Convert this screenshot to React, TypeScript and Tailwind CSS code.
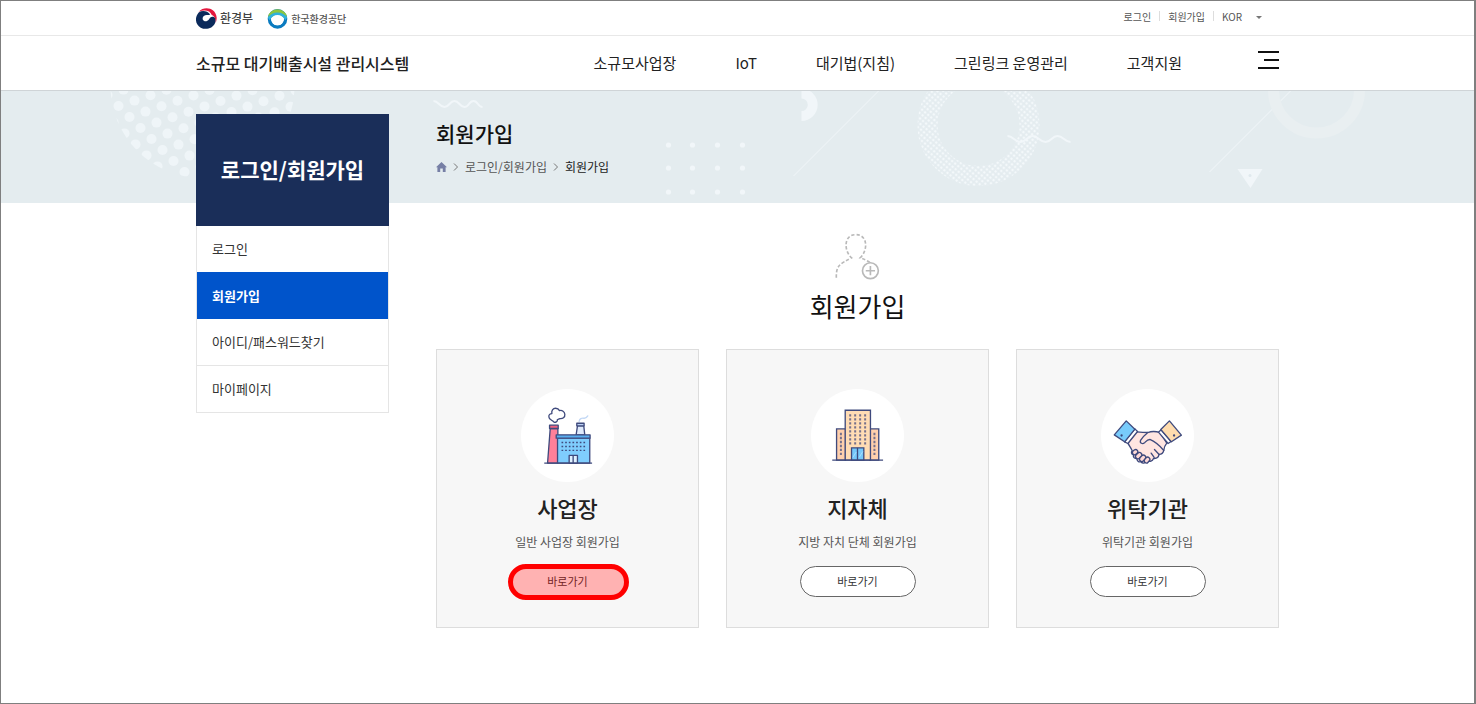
import type { ReactNode } from "react";

const navItems = ["소규모사업장", "IoT", "대기법(지침)", "그린링크 운영관리", "고객지원"];

const sideItems = [
  { label: "로그인", active: false },
  { label: "회원가입", active: true },
  { label: "아이디/패스워드찾기", active: false },
  { label: "마이페이지", active: false },
];

const INK = "#3f4a7d";

function MinistryEmblem() {
  return (
    <svg viewBox="0 0 62 62" className="size-[21px]" aria-hidden="true">
      <path d="M8 11C24-7 58-1 61 28c0 7-1 12-3 16 0-12-3-20-12-24C42 8 26 4 8 11Z" fill="#e4173e" />
      <path
        d="M8 13C-5 28-2 49 14 58c15 8 36 2 42-13 3-9 2-17-5-19-7-1-10 3-13 8-5 7-15 7-18 0-2-8 4-12 12-13 5 0 8-1 10-2C34 9 19 6 8 13Z"
        fill="#0b2a5b"
      />
    </svg>
  );
}

function KecoEmblem() {
  return (
    <svg viewBox="0 0 62 62" className="size-[21px]" aria-hidden="true">
      <circle cx="31" cy="32" r="24" fill="none" stroke="#0a7bc0" strokeWidth="10" />
      <path d="M3 25A29 29 0 0 1 59 25L48 27Q31 10 14 27Z" fill="#8cc63f" />
      <path d="M2 28Q14 13 31 13T60 28L54 36Q45 21 31 21T8 36Z" fill="#2fb1dc" />
      <path d="M12 32Q18 24 31 24T50 32A19 19 0 0 1 12 32Z" fill="#fff" />
    </svg>
  );
}

function BannerArt() {
  // slanted dot lattice, clipped by a circle
  const dots: { x: number; y: number }[] = [];
  for (let i = -6; i < 14; i++) {
    for (let j = -8; j < 14; j++) {
      const x = 118 + i * 16 + j * 11;
      const y = 15 - i * 5.4 + j * 11;
      if (x > 95 && x < 310 && y > -8 && y < 100) dots.push({ x, y });
    }
  }

  return (
    <svg
      viewBox="0 0 1474 112"
      preserveAspectRatio="xMidYMid slice"
      className="absolute inset-x-0 top-0 h-28 w-full bg-[#e4ecef]"
      aria-hidden="true"
    >
      <defs>
        <clipPath id="dotClip">
          <circle cx="202" cy="-5" r="92" />
        </clipPath>
        <pattern id="fineDots" width="4" height="4" patternUnits="userSpaceOnUse" patternTransform="rotate(40)">
          <circle cx="2" cy="2" r="1.3" fill="#f3f8fa" />
        </pattern>
      </defs>
      <g clipPath="url(#dotClip)" fill="#eff5f8">
        {dots.map((d) => (
          <circle key={`${d.x}:${d.y}`} cx={d.x} cy={d.y} r="5" />
        ))}
      </g>
      <g fill="none" stroke="#f1f6f9" strokeWidth="2">
        <path d="M433 10c5 0 6 6 11 6s5-6 10-6 5 6 10 6 4-6 9-6 4 6 9 6" />
        <path d="M1007 45c6 0 7 6 13 6s6-6 12-6 7 6 13 6 6-6 12-6 7 6 13 6" />
        <path d="M793 85 879-1M1209 81 1291-1" strokeWidth="1" />
      </g>
      <g fill="#f1f6f9">
        {[54, 77, 101].map((y) =>
          [668, 692, 717, 742].map((x) => <circle key={`${x}-${y}`} cx={x} cy={y} r="2.6" />)
        )}
        <path d="M801-2.300A16 16 0 0 1 801 30V20A6.300 6.300 0 0 0 801 7.400Z" />
        <path d="M1237 78h25l-12 19Z" />
      </g>
      <circle cx="1249.500" cy="84.500" r="1.500" fill="#e0e9ed" />
      <circle cx="978" cy="34" r="51" fill="none" stroke="url(#fineDots)" strokeWidth="20" />
      <circle cx="1316" cy="-1" r="43" fill="none" stroke="#e9eff1" strokeWidth="11" />
    </svg>
  );
}

function JoinIcon() {
  return (
    <svg viewBox="0 0 136 140" className="h-[47px] w-[45px]" fill="none" stroke="#b9b9b9" strokeWidth="5" aria-hidden="true">
      <path d="M4 134C3 96 16 92 50 74 26 52 26 4 63 4s37 48 13 70c12 4 22 9 31 15" strokeDasharray="10 6" />
      <circle cx="107" cy="113" r="24" />
      <path d="M107 99v28M93 113h28" />
    </svg>
  );
}

function FactoryIcon() {
  return (
    <svg viewBox="62 26 280 280" className="size-full" stroke={INK} strokeWidth="4" strokeLinejoin="round" aria-hidden="true">
      <path
        d="M162 126c-7-7-16-8-16-16-1-7 4-10 9-10-2-9 3-16 11-16 6 0 10 3 12 7 8-2 15 3 16 11 1 10-7 14-15 13-4 2-6 2-8 4 3 5-7 9-9 7Z"
        fill="#fff"
      />
      <path d="M237 124c1-9 8-11 14-10s9-2 12-7" fill="none" stroke="#c3d8f5" strokeLinecap="round" />
      <path d="m232 137-4 27h26l-3-27Z" fill="#dfeafb" />
      <path d="M230 129h22v8h-22Z" fill="#bcd2f4" />
      <path d="m150 145-8 104h31V145Z" fill="#ff8099" />
      <path d="M148 135h26v10h-26Z" fill="#f0607f" />
      <path d="M172 174h97v75h-97Z" fill="#7fcdfd" />
      <path d="M168 164h102v10H168Z" fill="#58aef0" />
      <path d="M207 226h25v23h-25Zm12 0v23" fill="#dff1ff" />
      <path d="M132 249h144" />
      <path d="M184 187h72M184 199h72M184 211h72" strokeDasharray="5 6" />
    </svg>
  );
}

function BuildingIcon() {
  return (
    <svg viewBox="62 26 280 280" className="size-full" stroke={INK} strokeWidth="4" aria-hidden="true">
      <path d="M139 146h27v94h-27Z" fill="#ffd0ad" />
      <path d="M239 146h27v94h-27Z" fill="#ffd0ad" />
      <path d="M165 90h76v150h-76Z" fill="#ffdcb4" />
      <path d="M184 203h37v37h-37Z" fill="#76c9fb" />
      <path d="M202 203v37" />
      <path d="m188 232 10-16m9 16 11-18" stroke="#a9defd" strokeWidth="3" />
      <path d="M126 240h153" />
      <path d="M180 102v95M195 102v95M210 102v95M225 102v95" strokeWidth="6" strokeDasharray="7 5" stroke="#77718b" />
      <path d="M152 158v69M253 158v69" strokeWidth="6" strokeDasharray="7 5" stroke="#77718b" />
    </svg>
  );
}

function HandshakeIcon() {
  return (
    <svg
      viewBox="48 26 280 280"
      className="size-full"
      stroke={INK}
      strokeWidth="4"
      strokeLinejoin="round"
      strokeLinecap="round"
      aria-hidden="true"
    >
      <path
        d="M151 155c13 1 24 2 38 2 13-5 24-4 37 0l20 32c-6 7-8 13-9 22-2 9-8 12-14 12-2 9-9 13-17 12-3 8-11 11-19 6-6 10-14 10-19 4-7 2-12-3-12-10-8 1-12-4-10-10-7-2-8-9-4-13-4-9-9-15-13-23Z"
        fill="#ffe5e1"
      />
      <path d="M189 157c-9 7-16 15-22 24-3 8 6 12 12 7 6-6 9-10 16-10 17 7 29 18 42 33" fill="#ffe5e1" />
      <path d="m209 208 14 15M199 219l9 13" fill="none" />
      <g fill="#ffd9d6">
        <rect x="142" y="210" width="17" height="13" rx="6.500" transform="rotate(-38 150 216)" />
        <rect x="151" y="220" width="21" height="14" rx="7" transform="rotate(-44 161 227)" />
        <rect x="163" y="228" width="21" height="14" rx="7" transform="rotate(-46 173 235)" />
        <rect x="177" y="234" width="19" height="13" rx="6.500" transform="rotate(-50 186 240)" />
      </g>
      <path d="m150 146 8 8-29 36-10-5Z" fill="#fff" />
      <path d="m229 149-8 7 29 34 9-6Z" fill="#fff" />
      <path d="m124 122 26 25-31 38-31-21Z" fill="#78cbfb" />
      <path d="m254 122 36 43-30 20-32-37Z" fill="#ffdcae" />
      <circle cx="110" cy="166" r="1.500" />
      <circle cx="268" cy="166" r="1.500" />
    </svg>
  );
}

type JoinCardProps = {
  title: string;
  text: string;
  icon: ReactNode;
  highlighted?: boolean;
};

function JoinCard({ title, text, icon, highlighted }: JoinCardProps) {
  return (
    <li className="flex flex-col items-center border border-[#dddddd] bg-[#f7f7f7] pt-[39px] pb-[30px]">
      <div className="size-[93px] rounded-full bg-white">{icon}</div>
      <h3 className="mt-[5px] text-[22px] leading-10 font-medium text-[#222222]">{title}</h3>
      <p className="mt-[5px] text-xs leading-5 text-[#555555]">{text}</p>
      <div className="relative mt-3.5">
        <button
          type="button"
          className="block h-[31px] w-[116px] rounded-full border border-[#666666] bg-white text-[11px] text-[#333333]"
        >
          바로가기
        </button>
        {highlighted && (
          <span className="pointer-events-none absolute -top-0.5 -right-[3px] -bottom-[3px] -left-0.5 rounded-full border-[5px] border-[#ff0000] bg-[#ff0000]/30" />
        )}
      </div>
    </li>
  );
}

function Chevron() {
  return (
    <svg viewBox="0 0 8 8" className="size-2" fill="none" stroke="#777777" aria-hidden="true">
      <path d="m2 .5 3.500 3.500L2 7.500" />
    </svg>
  );
}

export default function App() {
  return (
    <div className="min-h-screen border border-r-2 border-[#7f7f7f] bg-white font-['Noto_Sans_CJK_KR','Noto_Sans',sans-serif] text-[#222222]">
      {/* Top utility bar */}
      <div className="border-b border-[#e8e8e8]">
        <div className="mx-auto flex h-[34px] max-w-[1083px] items-center">
          <a href="#" className="flex items-center gap-[3px] text-xs font-medium text-[#444444]">
            <MinistryEmblem />
            환경부
          </a>
          <a href="#" className="ml-3.5 flex items-center gap-[3px] text-[10px] font-medium text-[#555555]">
            <KecoEmblem />
            한국환경공단
          </a>
          <div className="mr-[17px] ml-auto flex items-center pb-1 text-[10px] text-[#555555]">
            <a href="#">로그인</a>
            <span className="mx-2 h-2.5 w-px bg-[#dddddd]" />
            <a href="#">회원가입</a>
            <span className="mx-2 h-2.5 w-px bg-[#dddddd]" />
            <div className="relative">
              <select aria-label="언어" className="w-10 appearance-none bg-transparent outline-none">
                <option>KOR</option>
              </select>
              <svg viewBox="0 0 6 3" className="pointer-events-none absolute top-1/2 right-0 h-[3px] w-1.5" aria-hidden="true">
                <path d="M0 0h6L3 3Z" fill="#777777" />
              </svg>
            </div>
          </div>
        </div>
      </div>

      {/* Header */}
      <header className="border-b border-[#cfd4d7]">
        <div className="mx-auto flex h-[54px] max-w-[1083px] items-center">
          <h1 className="text-base font-medium">
            <a href="#">소규모 대기배출시설 관리시스템</a>
          </h1>
          <nav className="ml-auto flex gap-[59px] text-[15px]">
            {navItems.map((item) => (
              <a key={item} href="#">
                {item}
              </a>
            ))}
          </nav>
          <button type="button" aria-label="전체메뉴" className="ml-[76px] flex w-[21px] flex-col items-end gap-1.5 pb-1.5">
            <span className="h-0.5 w-full bg-[#111111]" />
            <span className="h-0.5 w-[15px] bg-[#111111]" />
            <span className="h-0.5 w-full bg-[#111111]" />
          </button>
        </div>
      </header>

      <div className="relative">
        <BannerArt />

        <div className="relative mx-auto flex max-w-[1083px] gap-[47px] pt-[23px]">
          <aside className="w-[193px] shrink-0">
            <h2 className="flex h-28 items-center justify-center bg-[#1a2e59] text-[21px] font-bold text-white">
              로그인/회원가입
            </h2>
            <ul className="border border-t-0 border-[#e5e5e5] text-[13px]">
              {sideItems.map((item) => (
                <li key={item.label} className={item.active ? "" : "border-b border-[#e5e5e5] last:border-b-0"}>
                  <a
                    href="#"
                    className={
                      item.active
                        ? "-mt-px flex h-[47px] items-center bg-[#0054cb] px-[15px] font-bold text-white"
                        : "flex h-[46px] items-center px-[15px] text-[#333333]"
                    }
                  >
                    {item.label}
                  </a>
                </li>
              ))}
            </ul>
          </aside>

          <main className="min-w-0 flex-1">
            <h2 className="-mt-px text-[21px] leading-10 font-medium text-[#111111]">회원가입</h2>
            <div className="mt-1 flex h-5 items-center gap-[5px] text-xs text-[#555555]">
              <a href="#" aria-label="홈">
                <svg viewBox="0 0 11 10" className="h-2.5 w-[11px]" fill="#767fa5" aria-hidden="true">
                  <path d="M5.500 0 11 5.300H9.600V10H6.800V6.500H4.200V10H1.400V5.300H0Z" />
                </svg>
              </a>
              <Chevron />
              <a href="#">로그인/회원가입</a>
              <Chevron />
              <span className="text-[#222222]">회원가입</span>
            </div>

            <div className="mt-14 flex flex-col items-center">
              <JoinIcon />
              <h3 className="mt-1.5 text-[26px] leading-10 text-[#111111]">회원가입</h3>
            </div>

            <ul className="mt-[23px] grid grid-cols-3 gap-[27px]">
              <JoinCard title="사업장" text="일반 사업장 회원가입" icon={<FactoryIcon />} highlighted />
              <JoinCard title="지자체" text="지방 자치 단체 회원가입" icon={<BuildingIcon />} />
              <JoinCard title="위탁기관" text="위탁기관 회원가입" icon={<HandshakeIcon />} />
            </ul>
          </main>
        </div>
      </div>
    </div>
  );
}
